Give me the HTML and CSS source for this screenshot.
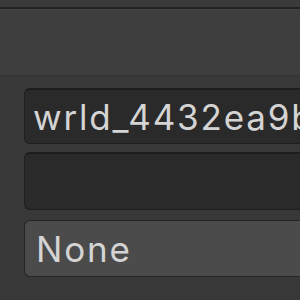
FILE: index.html
```html
<!DOCTYPE html>
<html>
<head>
<meta charset="utf-8">
<link rel="stylesheet" href="styles.css">
</head>
<body>
<div class="top"></div>
<div class="panel"></div>
<div class="fields">
  <div class="field dark f1"><span>wrld_4432ea9b</span></div>
  <div class="field dark f2"></div>
  <div class="field light f3"><span>None</span></div>
</div>
</body>
</html>
```
FILE: styles.css
```css
html, body {
  margin: 0;
  padding: 0;
  width: 300px;
  height: 300px;
  overflow: hidden;
  background: #383838;
  font-family: Inter, "Noto Sans", sans-serif;
}
.top {
  height: 7px;
  background: #3a3a3a;
  border-bottom: 2px solid #232323;
}
.panel {
  height: 65px;
  background: #3e3e3e;
  border-top: 1px solid #444444;
  border-bottom: 1px solid #333333;
}
.fields {
  display: flex;
  flex-direction: column;
  padding: 12px 0 0 24px;
}
.field {
  border-radius: 6px 0 0 6px;
  box-sizing: border-box;
  border: 1px solid #1f1f1f;
  border-right: none;
  display: flex;
  align-items: center;
  padding-left: 8px;
  font-size: 35px;
  letter-spacing: 1.8px;
  color: #d4d4d4;
  white-space: nowrap;
  overflow: hidden;
}
.f1 { height: 56px; }
.f2 { height: 58px; margin-top: 8px; }
.f3 { height: 57px; margin-top: 10px; }
.dark {
  background: #2a2a2a;
  border-top: 2px solid #1c1c1c;
}
.light {
  background: #4b4b4b;
  border-color: #252525;
  padding-left: 11px;
}
```
